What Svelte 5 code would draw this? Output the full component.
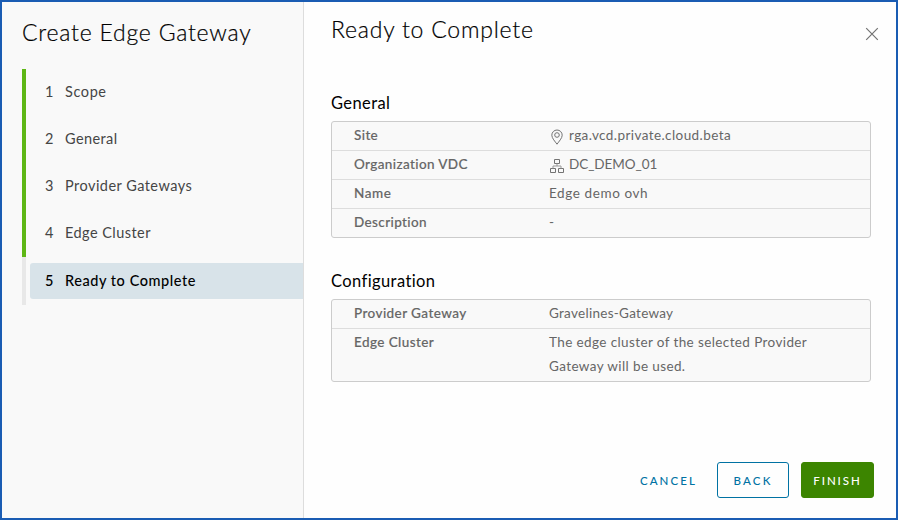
<script>
  const steps = [
    { label: 'Scope', spacing: 0.6 },
    { label: 'General', spacing: 0.4 },
    { label: 'Provider Gateways', spacing: 0.46 },
    { label: 'Edge Cluster', spacing: 0.45 },
    { label: 'Ready to Complete', spacing: 0.55, active: true },
  ];
  const sections = [
    {
      title: 'General', spacing: 0.4,
      rows: [
        { label: 'Site', ls: 0.4, value: 'rga.vcd.private.cloud.beta', vs: 0.42, icon: 'pin' },
        { label: 'Organization VDC', ls: 0.38, value: 'DC_DEMO_01', vs: -0.05, icon: 'org' },
        { label: 'Name', ls: 0.55, value: 'Edge demo ovh', vs: 0.6 },
        { label: 'Description', ls: 0.38, value: '-', vs: 0 },
      ],
    },
    {
      title: 'Configuration', spacing: 0.4,
      rows: [
        { label: 'Provider Gateway', ls: 0.42, value: 'Gravelines-Gateway', vs: 0.28 },
        { label: 'Edge Cluster', ls: 0.42, value: 'The edge cluster of the selected Provider Gateway will be used.', vs: 0.39 },
      ],
    },
  ];
</script>

<div class="wizard">
  <aside>
    <h1>Create Edge Gateway</h1>
    <ol>
      {#each steps as step, i}
        <li class:active={step.active}>
          <div class="step"><span class="num">{i + 1}</span><span style="letter-spacing: {step.spacing}px">{step.label}</span></div>
        </li>
      {/each}
    </ol>
  </aside>
  <main>
    <header>
      <h2>Ready to Complete</h2>
      <button class="close" aria-label="Close">
        <svg width="14" height="14" viewBox="0 0 14 14"><path d="M1.2 1.2 12.8 12.8M12.8 1.2 1.2 12.8" /></svg>
      </button>
    </header>
    <div class="content">
      {#each sections as section}
        <section>
          <h3 style="letter-spacing: {section.spacing}px">{section.title}</h3>
          <dl>
            {#each section.rows as row}
              <div class="row">
                <dt style="letter-spacing: {row.ls}px">{row.label}</dt>
                <dd style="letter-spacing: {row.vs}px">
                  {#if row.icon === 'pin'}
                    <svg class="icon" width="16" height="16" viewBox="0 0 16 16"><path d="M8 15.2C6.2 12.6 2.8 9.2 2.8 6.2a5.2 5.2 0 0 1 10.4 0c0 3-3.4 6.4-5.2 9Z" /><circle cx="8" cy="6" r="2.3" /></svg>
                  {:else if row.icon === 'org'}
                    <svg class="icon" width="16" height="16" viewBox="0 0 16 16"><path d="M5.5 1.5h5v4h-5zM1.5 10.5h5v4h-5zM9.5 10.5h5v4h-5z" /><path class="link" d="M8 5.5V8M4 10.5V8h8v2.5" /></svg>
                  {/if}
                  <span>{row.value}</span>
                </dd>
              </div>
            {/each}
          </dl>
        </section>
      {/each}
    </div>
    <footer>
      <button class="cancel">CANCEL</button>
      <button class="back">BACK</button>
      <button class="finish">FINISH</button>
    </footer>
  </main>
</div>

<style>
  :global(body) { margin: 0; }
  .wizard {
    box-sizing: border-box;
    width: 898px;
    height: 520px;
    display: flex;
    border: 2px solid #1a5cb3;
    background: #fefefe;
    font-family: Lato, sans-serif;
    color: #000;
  }
  h1, h2, h3, ol, dl, dd { margin: 0; padding: 0; }
  h1, h2 {
    font-weight: 300;
    font-size: 23px;
    line-height: 30px;
    white-space: nowrap;
    letter-spacing: 0.78px;
    -webkit-text-stroke: 0.2px #000;
  }
  aside {
    box-sizing: border-box;
    width: 302px;
    padding: 15px 0 0 20px;
    background: #f9f9f9;
    border-right: 1px solid #ddd;
  }
  ol { margin-top: 22px; list-style: none; }
  li {
    box-sizing: border-box;
    height: 47px;
    padding: 5px 0 6px 4px;
    border-left: 4px solid #5eb715;
    font-size: 14.5px;
    color: #454545;
  }
  li.active { height: 48px; padding-top: 6px; border-color: #e8e8e8; color: #000; font-weight: 500; }
  .step {
    box-sizing: border-box;
    display: flex;
    align-items: center;
    height: 36px;
    padding-bottom: 2px;
    border-radius: 3px 0 0 3px;
    white-space: nowrap;
  }
  li.active .step { background: #d8e3e9; }
  .num { width: 20px; padding-left: 15px; }
  main { flex: 1; display: flex; flex-direction: column; padding: 12px 22px 20px 27px; }
  header { display: flex; justify-content: space-between; }
  button { font-family: inherit; cursor: pointer; }
  .close { width: 14px; height: 14px; margin: 13px -5px 0 0; padding: 0; border: 0; background: none; }
  .close svg { display: block; fill: none; stroke: #737373; stroke-width: 1.2; }
  .content { flex: 1; padding: 48px 3px 0 0; }
  section { margin-bottom: 32px; }
  h3 { height: 29px; font-size: 16.5px; line-height: 22px; font-weight: 400; }
  dl {
    box-sizing: border-box;
    width: 540px;
    border: 1px solid #ccc;
    border-radius: 3px;
    background: #f9f9f9;
    font-size: 13.5px;
    line-height: 24px;
    color: #666;
  }
  .row { display: flex; padding: 1px 0 3px; }
  .row + .row { border-top: 1px solid #ddd; }
  dt { width: 195px; padding-left: 22px; font-weight: 500; -webkit-text-stroke: 0.15px #666; }
  dd { display: flex; width: 280px; }
  .icon { flex: none; margin: 6px 4px 0 0; fill: none; stroke: #737373; stroke-width: 1; }
  .link { stroke: #999; }
  footer { display: flex; justify-content: flex-end; }
  footer button {
    box-sizing: border-box;
    height: 36px;
    padding: 0;
    border: 1px solid #0072a3;
    border-radius: 3px;
    background: none;
    color: #0072a3;
    font-size: 11.5px;
    font-weight: 500;
  }
  footer .cancel { width: 77px; margin-right: 10px; border-color: transparent; letter-spacing: 2.1px; }
  footer .back { width: 72px; margin-right: 12px; letter-spacing: 2.2px; }
  footer .finish { width: 73px; background: #3c8500; border-color: #3c8500; color: #fff; letter-spacing: 1.9px; }
</style>
